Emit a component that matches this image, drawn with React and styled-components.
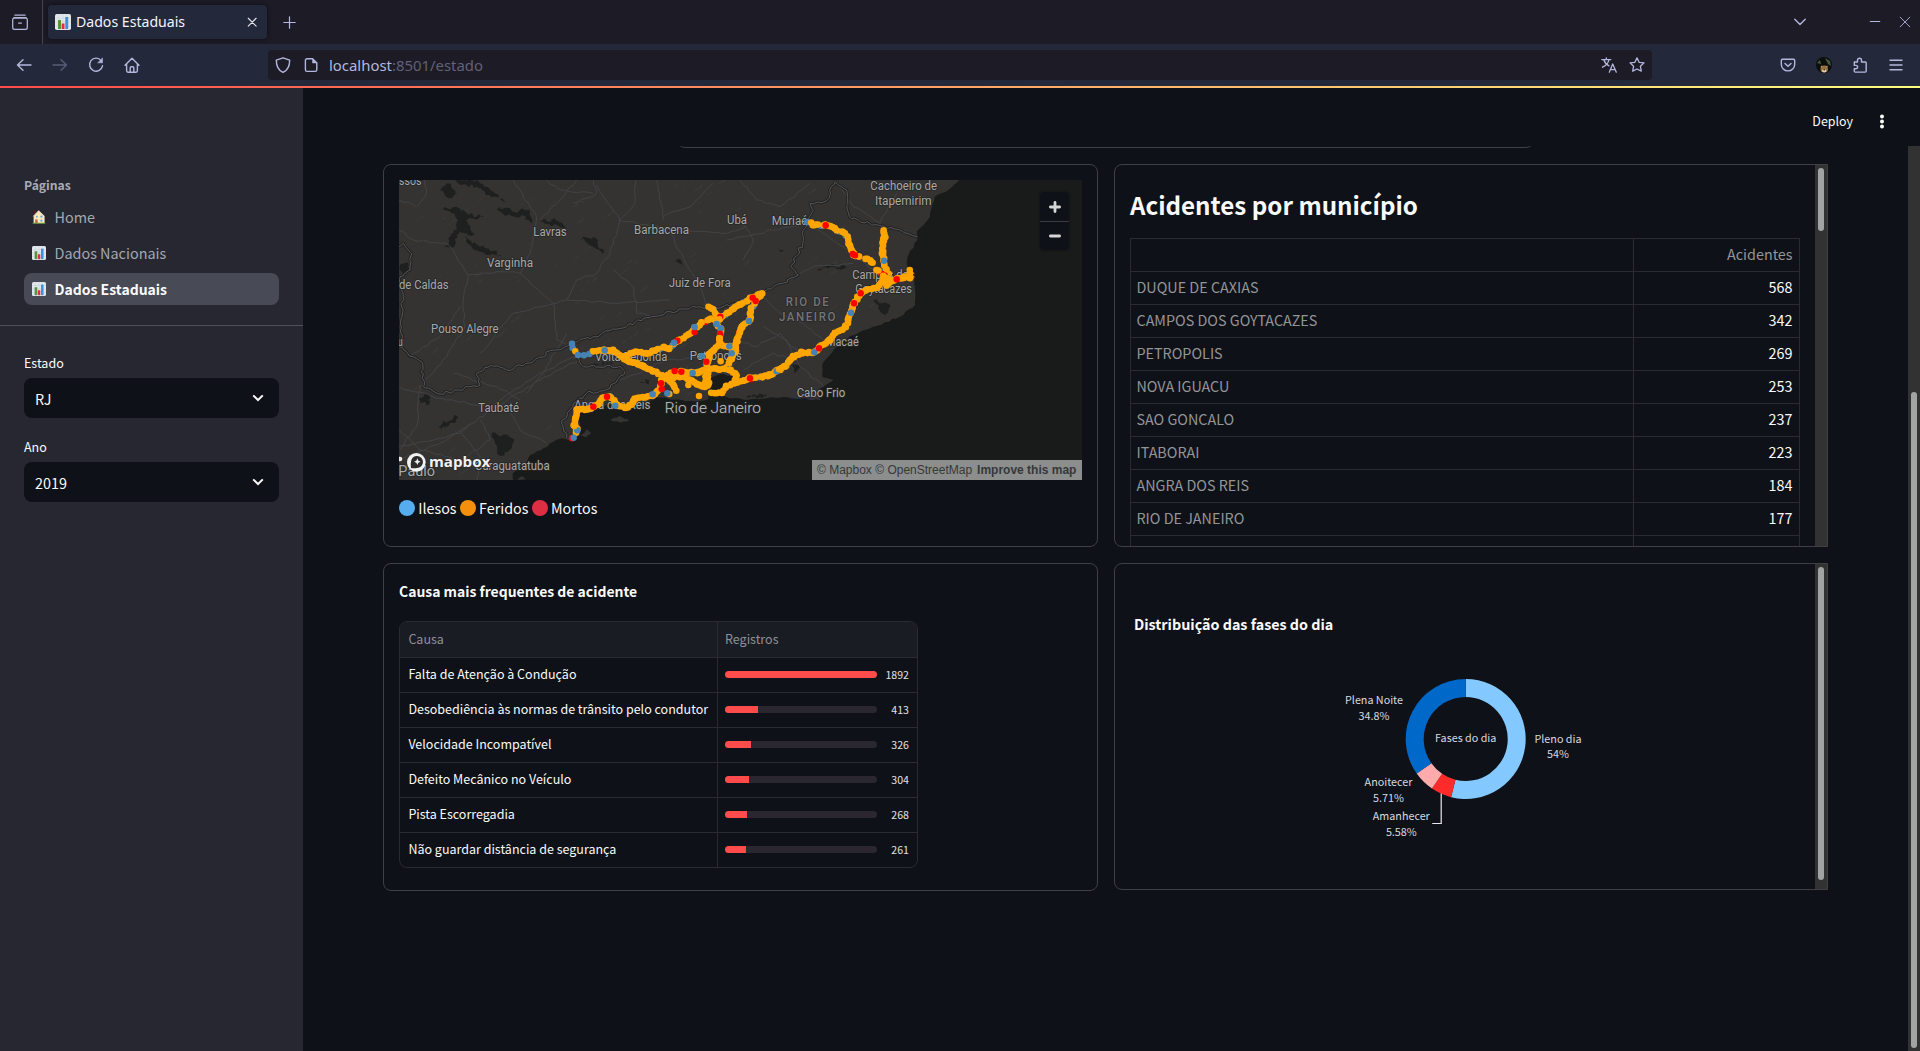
import React from "react";
import styled, { createGlobalStyle } from "styled-components";

const SANS = `"Noto Sans CJK JP", "Source Sans Pro", "Noto Sans", sans-serif`;
const CHROME = `"Noto Sans", "Open Sans", sans-serif`;
const ICON = "#b4b7dd";

const Global = createGlobalStyle`
  *, *::before, *::after { box-sizing: border-box; }
  html, body { margin: 0; padding: 0; background: #0e1117; overflow: hidden; }
  body { font-family: ${SANS}; color: #fafafa; }
  svg { display: block; flex: none; }
`;

/* ---------- browser window ---------- */

const Window = styled.div`
  display: flex;
  flex-direction: column;
  width: 1920px;
  height: 1051px;
  overflow: hidden;
`;

const TabBar = styled.header`
  display: flex;
  align-items: center;
  height: 44px;
  background: #1c1b26;
  flex: none;
`;

const RecentButton = styled.div`
  display: flex;
  align-items: center;
  width: 43px;
  height: 44px;
  padding-left: 12px;
  border-right: 1px solid #44434f;
`;

const Tab = styled.div`
  display: flex;
  align-items: center;
  width: 219px;
  height: 34px;
  margin-left: 5px;
  padding: 0 9px 0 7px;
  border-radius: 4px;
  background: #24283b;
  box-shadow: 0 0 4px rgba(0, 0, 0, 0.5);
`;

const TabTitle = styled.span`
  flex: 1;
  margin-left: 5px;
  font: 400 14.1px/20px ${CHROME};
  color: #f4f4fb;
  white-space: nowrap;
`;

const NewTab = styled.div`
  margin-left: 16px;
`;

const WindowControls = styled.div`
  display: flex;
  align-items: center;
  margin-left: auto;
  padding-right: 8px;
`;

const Spaced = styled.div`
  margin-left: ${(p) => p.$left}px;
`;

const NavBar = styled.nav`
  display: flex;
  align-items: center;
  height: 42px;
  padding-left: 16px;
  background: #24283b;
  flex: none;
`;

const NavButtons = styled.div`
  display: flex;
  gap: 20px;
  width: 252px;
`;

const UrlBar = styled.div`
  display: flex;
  align-items: center;
  width: 1384px;
  height: 30px;
  padding: 0 7px 0 7px;
  border-radius: 4px;
  background: #1c1b26;
`;

const Url = styled.span`
  flex: 1;
  margin-left: 10px;
  font: 400 14.9px/22px ${CHROME};
  color: #626177;
  b {
    font-weight: 400;
    color: #b4b7dd;
  }
`;

const Extensions = styled.div`
  display: flex;
  align-items: center;
  gap: 20px;
  margin-left: 128px;
`;

const Decoration = styled.div`
  height: 2px;
  flex: none;
  background: linear-gradient(90deg, #ff4b4b, #fffd80);
`;

/* ---------- application frame ---------- */

const Frame = styled.div`
  display: flex;
  flex: 1;
  min-height: 0;
`;

const Sidebar = styled.aside`
  width: 303px;
  flex: none;
  background: #262730;
`;

const SideSection = styled.section`
  padding: ${(p) => p.$padding};
`;

const SideTitle = styled.h4`
  margin: 0 0 6px;
  font-size: 12.2px;
  line-height: 20px;
  font-weight: 700;
  color: #a9abb6;
`;

const PageLink = styled.a`
  display: flex;
  align-items: center;
  gap: 8.5px;
  height: 32px;
  margin-bottom: 4px;
  padding-left: 8px;
  border-radius: 8px;
  font-size: ${(p) => (p.$active ? 14 : 14.4)}px;
  line-height: 32px;
  font-weight: ${(p) => (p.$active ? 700 : 400)};
  color: ${(p) => (p.$active ? "#fafafa" : "#a3a8b4")};
  background: ${(p) => (p.$active ? "#484a55" : "transparent")};
`;

const Divider = styled.div`
  height: 1px;
  background: #4d4f59;
`;

const FieldLabel = styled.div`
  font-size: 12.5px;
  line-height: 20px;
  margin: 0 0 5px;
`;

const Select = styled.div`
  display: flex;
  align-items: center;
  justify-content: space-between;
  height: 40px;
  margin-bottom: 19px;
  padding: 0 15px 0 11px;
  border-radius: 8px;
  background: #0e1117;
  font-size: 14.4px;
`;

const Main = styled.main`
  display: flex;
  flex-direction: column;
  flex: 1;
  min-width: 0;
  background: #0e1117;
`;

const Toolbar = styled.div`
  display: flex;
  align-items: center;
  justify-content: flex-end;
  gap: 25px;
  height: 58px;
  padding: 10px 34px 0 0;
  flex: none;
`;

const Deploy = styled.span`
  padding-bottom: 2px;
  font-size: 12.45px;
  line-height: 20px;
`;

const Scroller = styled.div`
  display: flex;
  flex: 1;
  min-height: 0;
`;

const Content = styled.div`
  flex: 1;
  padding-left: 80px;
  overflow: hidden;
`;

const PreviousCard = styled.div`
  width: 857px;
  height: 20px;
  margin: -18px 0 16px 294px;
  border: 1px solid #3e4044;
  border-radius: 8px;
`;

const Grid = styled.div`
  display: grid;
  grid-template-columns: 715px 714px;
  gap: 16px;
  align-items: start;
`;

const Card = styled.section`
  display: flex;
  height: ${(p) => p.$height}px;
  border: 1px solid #3e4044;
  border-radius: ${(p) => (p.$scroll ? "8px 0 0 8px" : "8px")};
  overflow: hidden;
`;

const CardBody = styled.div`
  flex: 1;
  min-width: 0;
  padding: 15px;
`;

const Track = styled.div`
  width: ${(p) => p.$width}px;
  padding: ${(p) => p.$top}px 3px 0;
  background: #323232;
  flex: none;
`;

const Thumb = styled.div`
  height: ${(p) => p.$height}px;
  border-radius: 3px;
  background: #a2a3a3;
`;

/* ---------- map ---------- */

const MapBox = styled.div`
  position: relative;
  width: 683px;
  height: 300px;
  overflow: hidden;
`;

const ZoomButtons = styled.div`
  position: absolute;
  top: 12px;
  right: 13px;
  display: flex;
  flex-direction: column;
  width: 29px;
  border-radius: 4px;
  background: #0e1117;
  box-shadow: 0 0 0 2px rgba(0, 0, 0, 0.1);
`;

const ZoomButton = styled.div`
  display: flex;
  align-items: center;
  justify-content: center;
  height: 29px;
  & + & {
    border-top: 1px solid #3a3c42;
  }
`;

const Attribution = styled.div`
  position: absolute;
  right: 0;
  bottom: 0;
  display: flex;
  gap: 5px;
  width: 270px;
  height: 20px;
  padding: 0 5px;
  background: #8c8d8d;
  font: 12px/20px "Liberation Sans", Arial, sans-serif;
  color: #363838;
  white-space: nowrap;
`;

const MapLabel = styled.text`
  font-family: Roboto, sans-serif;
  font-size: ${(p) => p.$size || 36}px;
  letter-spacing: ${(p) => p.$spacing || 0}px;
  font-weight: ${(p) => p.$weight || 400};
  fill: ${(p) => p.$fill || "#a9a9a9"};
  paint-order: stroke;
  stroke: #262626;
  stroke-width: 5px;
  stroke-linejoin: round;
`;

const Wordmark = styled.text`
  font: 700 43px "Open Sans", sans-serif;
  fill: #f2f2f2;
  paint-order: stroke;
  stroke: #2b2b2b;
  stroke-width: 5px;
`;

const Legend = styled.div`
  display: flex;
  align-items: center;
  gap: 3.3px;
  margin-top: 16px;
  font-size: 14.3px;
  line-height: 24px;
`;

const LegendDot = styled.i`
  width: 16px;
  height: 16px;
  border-radius: 50%;
  background: ${(p) => p.$color};
`;

/* ---------- tables ---------- */

const Heading = styled.h2`
  margin: 0 0 16px;
  padding-top: 8px;
  font-size: 24.15px;
  line-height: 34px;
  font-weight: 700;
`;

const CityTable = styled.div`
  width: 670px;
  border: 1px solid #292b2f;
  border-bottom: 0;
`;

const CityRow = styled.div`
  display: grid;
  grid-template-columns: 502px 1fr;
  height: 33px;
  border-bottom: 1px solid #292b2f;
  font-size: 14.35px;
  line-height: 30px;
`;

const City = styled.div`
  padding-left: 5.5px;
  color: #949597;
`;

const Count = styled.div`
  padding-right: 6.5px;
  border-left: 1px solid #292b2f;
  text-align: right;
  color: ${(p) => (p.$head ? "#949597" : "#fafafa")};
`;

const SmallHeading = styled.h3`
  margin: ${(p) => p.$margin};
  font-size: ${(p) => p.$size}px;
  line-height: 24px;
  font-weight: 700;
`;

const CauseTable = styled.div`
  width: 519px;
  border: 1px solid #292b2f;
  border-radius: 8px;
  overflow: hidden;
`;

const CauseRow = styled.div`
  display: grid;
  grid-template-columns: 318px 1fr;
  height: ${(p) => (p.$head ? 36 : 35)}px;
  background: ${(p) => (p.$head ? "#1a1c24" : "transparent")};
  color: ${(p) => (p.$head ? "#8f9095" : "#fafafa")};
  font-size: 12.5px;
  line-height: ${(p) => (p.$head ? 33 : 32)}px;
  border-bottom: 1px solid #292b2f;
  &:last-child {
    height: 34px;
    border-bottom: 0;
  }
`;

const Cause = styled.div`
  padding-left: 8.4px;
  border-right: 1px solid #292b2f;
  white-space: nowrap;
`;

const Records = styled.div`
  display: flex;
  align-items: ${(p) => (p.$head ? "flex-start" : "center")};
  justify-content: space-between;
  padding: 0 8px 0 7px;
`;

const Bar = styled.div`
  width: 152px;
  height: 7px;
  margin-bottom: 1px;
  border-radius: 4px;
  overflow: hidden;
  background: #2a2730;
`;

const BarFill = styled.div`
  height: 100%;
  background: #ff4b4b;
`;

const RecordCount = styled.span`
  padding-bottom: 1px;
  font-size: 10.6px;
  color: #e2e2e4;
`;

const ChartArea = styled.div`
  svg text {
    font-family: ${SANS};
    font-size: 10.75px;
    fill: #d9dae0;
    text-anchor: middle;
  }
`;

/* ---------- icons ---------- */

const Line = ({ size = 16, color = ICON, width = 1.25, children }) => (
  <svg width={size} height={size} viewBox="0 0 16 16" fill="none" stroke={color} strokeWidth={width} strokeLinecap="round" strokeLinejoin="round">
    {children}
  </svg>
);

const ChartIcon = ({ size = 16 }) => (
  <svg width={size} height={size} viewBox="0 0 16 16">
    <rect width="16" height="16" rx="1.8" fill="#e1e8ed" />
    <path d="M0 4h16M0 8h16M0 12h16M4 0v16M8 0v16M12 0v16" stroke="#c6d3dc" strokeWidth=".6" />
    <rect x="3" y="6" width="3" height="9" fill="#5c913b" />
    <rect x="6.7" y="9.5" width="2.8" height="5.5" fill="#dd2e44" />
    <rect x="10.3" y="3" width="2.9" height="12" fill="#3b94d9" />
  </svg>
);

const HouseIcon = () => (
  <svg width="14" height="14" viewBox="0 0 14 14">
    <rect x="2.7" y="1.3" width="1.6" height="3" fill="#a0041e" />
    <path d="M1.6 6 6.8.6 12.6 6v7.2h-11z" fill="#ffe8b6" />
    <path d="M1 6.3 6.6.7 9 3l2.9 3.2" fill="none" stroke="#d9d6c4" strokeWidth=".7" />
    <rect x="3.2" y="9.4" width="2.4" height="3.6" fill="#c1694f" />
    <rect x="8.4" y="5.6" width="2" height="2" fill="#55acee" />
    <rect x="8.4" y="9.6" width="2" height="2" fill="#55acee" />
    <rect x="4" y="5.8" width="1.6" height="1.6" fill="#55acee" />
    <rect x=".6" y="12.8" width="12.8" height="1" fill="#5c913b" />
  </svg>
);

const Avatar = () => (
  <svg width="16" height="16" viewBox="0 0 16 16">
    <clipPath id="round"><circle cx="8" cy="8" r="8" /></clipPath>
    <g clipPath="url(#round)">
      <rect width="16" height="16" fill="#0b0f0c" />
      <path d="M9 1l5 3 1 5-3-2zM1 6l3-3 1 4z" fill="#455a3c" />
      <ellipse cx="8.2" cy="12" rx="3.8" ry="3.6" fill="#94703f" />
      <path d="M5 9l1.4 1.1M11.500 9l-1.300 1.100" stroke="#b8976b" strokeWidth="1.2" />
      <ellipse cx="8.2" cy="13.8" rx="2.2" ry="1.6" fill="#e2cfb2" />
      <circle cx="8.2" cy="12.8" r=".8" fill="#201a17" />
    </g>
  </svg>
);

const Chevron = () => (
  <svg width="12" height="8" viewBox="0 0 12 8" fill="none" stroke="#fafafa" strokeWidth="2">
    <path d="M1.2 1.4 6 6l4.8-4.6" />
  </svg>
);

/* ---------- map data (units: thirds of a pixel) ---------- */

let seed = 7;
const rnd = () => {
  seed = (seed * 16807) % 2147483647;
  return seed / 2147483647 - 0.5;
};

// Breaks every segment into short jittered steps, like a digitised line.
const rough = (flat, amp = 8, step = 14) => {
  const out = [];
  for (let i = 0; i + 3 < flat.length; i += 2) {
    const [x1, y1, x2, y2] = flat.slice(i, i + 4);
    const n = Math.max(1, Math.round(Math.hypot(x2 - x1, y2 - y1) / step));
    for (let k = 0; k < n; k++) {
      const j = k ? amp : 0;
      out.push([x1 + ((x2 - x1) * k) / n + rnd() * j, y1 + ((y2 - y1) * k) / n + rnd() * j]);
    }
  }
  out.push(flat.slice(-2));
  return out.map((p) => p.map((v) => v.toFixed(1)).join(",")).join(" ");
};

const coast = rough([
  400, 1025, 398, 1000, 440, 965, 450, 945, 490, 925, 520, 905, 545, 895, 575, 900, 600, 885, 600, 850, 590, 815,
  640, 800, 690, 795, 735, 812, 762, 798, 800, 785, 830, 772, 870, 778, 940, 784, 985, 778, 992, 745, 990, 712,
  1030, 702, 1060, 712, 1052, 735, 1030, 742, 1022, 765, 1040, 772, 1100, 780, 1210, 771, 1322, 781, 1310, 755,
  1360, 719, 1328, 712, 1328, 670, 1370, 620, 1410, 588, 1480, 560, 1560, 530, 1605, 495, 1603, 420, 1580, 370,
  1585, 345, 1612, 300, 1610, 275, 1650, 230, 1664, 170, 1705, 150, 1738, 118,
], 5, 12) + " 2110,118 2110,1025";

const islands = [
  [690, 840, 718, 828, 748, 842, 722, 848, 690, 840],
  [602, 888, 620, 868, 634, 880, 615, 892, 602, 888],
  [412, 1020, 425, 1008, 438, 1018],
].map((p) => rough(p, 5, 8));

const darkPatches = [
  [180, 150, 200, 130, 235, 160, 205, 175, 180, 150],
  [225, 120, 290, 120, 345, 160, 380, 190, 330, 165, 290, 140, 240, 135],
  [190, 205, 230, 200, 265, 225, 310, 228, 258, 240, 285, 285, 240, 275, 215, 330, 195, 325, 220, 270, 240, 240, 190, 205],
  [345, 200, 400, 215, 450, 210, 455, 250, 425, 225, 375, 228, 345, 200],
  [480, 245, 525, 235, 560, 265, 510, 255, 480, 245],
  [255, 290, 300, 320, 365, 345, 330, 345, 285, 330, 255, 290],
  [600, 300, 640, 290, 672, 338, 640, 320, 600, 300],
  [880, 365, 900, 358, 910, 378, 880, 365],
  [60, 370, 85, 375, 78, 405, 62, 392, 60, 370],
  [115, 775, 150, 765, 145, 795, 120, 790, 115, 775],
  [175, 860, 225, 825, 235, 835, 195, 865, 175, 860],
  [335, 880, 385, 885, 405, 915, 360, 948, 345, 910, 335, 880],
  [780, 728, 815, 710, 805, 735, 780, 728],
  [1480, 480, 1530, 490, 1515, 525, 1500, 512, 1480, 480],
  [1240, 672, 1262, 678, 1245, 700, 1240, 672],
  [1192, 318, 1216, 330, 1205, 335, 1192, 318],
  [1310, 390, 1360, 374, 1400, 382, 1350, 382, 1310, 390],
  [640, 668, 700, 672, 650, 676, 640, 668],
  [1100, 768, 1160, 765, 1140, 772, 1100, 768],
].map((p) => rough(p, 14, 8));

const borders = [
  [57, 320, 70, 310, 95, 340, 90, 390, 60, 410, 70, 470, 62, 540, 68, 590, 57, 620, 100, 650, 125, 665, 130, 740, 180, 762, 300, 735, 290, 700, 335, 675, 380, 690, 460, 665, 520, 630, 640, 590, 690, 572, 740, 560, 790, 535, 870, 515, 960, 500, 1010, 505, 1110, 478, 1145, 460],
  [590, 650, 610, 680, 720, 678, 735, 695, 690, 745, 620, 760, 580, 790, 545, 850, 560, 895],
  [1145, 460, 1190, 435, 1255, 405, 1232, 380, 1268, 310, 1270, 270, 1300, 210, 1290, 190, 1340, 182, 1365, 125, 1400, 150, 1408, 230, 1480, 255, 1560, 270, 1612, 290],
].map((p) => rough(p, 10, 10));

const roads = [
  [57, 180, 110, 200, 140, 160, 134, 120], [57, 270, 100, 300, 200, 310, 265, 405, 350, 395, 420, 400, 520, 490, 530, 600, 570, 620],
  [265, 405, 250, 480, 255, 560, 200, 650, 120, 740, 110, 860, 60, 930], [480, 240, 540, 180, 590, 120], [400, 120, 470, 230, 450, 340, 420, 400],
  [650, 135, 720, 240, 690, 340, 650, 400, 590, 420, 560, 480, 700, 490, 870, 480], [720, 240, 765, 190, 768, 120],
  [715, 240, 860, 265, 950, 275, 1040, 280, 1100, 260], [870, 280, 905, 340, 960, 440, 985, 500], [830, 120, 850, 240],
  [1040, 300, 1080, 290, 1180, 270, 1275, 250], [1080, 230, 1120, 300, 1090, 360], [300, 640, 400, 520, 560, 480],
  [57, 740, 200, 780, 330, 800, 450, 720, 560, 660, 620, 640], [57, 960, 180, 910, 260, 860, 350, 800, 480, 720, 600, 660],
  [57, 920, 160, 900, 240, 880, 270, 850], [57, 870, 120, 930, 240, 960, 330, 900, 300, 840], [240, 870, 300, 950, 290, 1020],
  [380, 800, 420, 870, 500, 910], [90, 650, 180, 590, 240, 500], [440, 760, 500, 680, 560, 580], [1145, 465, 1200, 520, 1280, 560, 1330, 600],
  [1300, 260, 1420, 340, 1500, 410], [1370, 130, 1420, 200, 1500, 250, 1550, 160], [1230, 420, 1300, 380, 1420, 370],
  [1150, 560, 1220, 600, 1260, 680, 1330, 740], [1060, 600, 1130, 620, 1200, 580, 1260, 640], [1090, 690, 1180, 640, 1240, 660],
  [580, 190, 650, 160, 640, 120], [850, 230, 930, 200, 1000, 130], [500, 120, 540, 150, 640, 160], [1080, 120, 1130, 180, 1200, 200, 1290, 130],
  [220, 700, 350, 740, 420, 780], [700, 390, 760, 440, 770, 520, 840, 530], [720, 720, 780, 700, 860, 660, 960, 650],
].map((p) => rough(p, 7, 16));

// Faint diagonal hill shading over the land.
const hills = Array.from({ length: 190 }, () => {
  const x = 850 + rnd() * 1580;
  const y = 570 + rnd() * 880;
  const len = 14 + (rnd() + 0.5) * 26;
  return rough([x, y, x + len, y - len * 0.75, x + len * 0.75, y - len * 0.35, x, y], 5, 8);
});

const O = "#ffa500";
const B = "#4682b4";
const R = "#ff0000";

const tracks = [
  [640, 632, 674, 631, 700, 632, 725, 650, 750, 664, 790, 678, 820, 692, 850, 708, 880, 712, 915, 712, 950, 732, 975, 740],
  [728, 650, 765, 637, 800, 640, 825, 632, 850, 623, 868, 625, 895, 602, 930, 580, 945, 565, 965, 547, 990, 538, 1018, 538, 1040, 520, 1060, 505, 1080, 493, 1100, 482, 1118, 473, 1146, 460],
  [1146, 460, 1127, 482, 1114, 505, 1110, 540, 1085, 560, 1078, 580, 1070, 605, 1066, 628, 1055, 655, 1042, 680],
  [985, 498, 1000, 510, 1014, 530, 1010, 550, 1022, 565, 1018, 600, 1020, 615, 1048, 619, 1066, 630],
  [1018, 612, 1000, 628, 988, 645, 982, 665, 978, 690, 978, 715, 975, 738],
  [850, 712, 870, 700, 904, 695, 950, 698, 980, 688, 1010, 687, 1050, 690, 1070, 705, 1065, 730, 1040, 738, 1025, 758, 995, 760],
  [1065, 728, 1090, 723, 1110, 715, 1145, 710, 1170, 705, 1192, 692, 1215, 680, 1230, 660, 1240, 650, 1265, 638, 1305, 637, 1320, 622, 1350, 600, 1365, 580, 1395, 562, 1405, 540, 1413, 515, 1422, 490, 1442, 460, 1458, 450, 1492, 442, 1510, 422, 1525, 400],
  [1512, 270, 1514, 290, 1508, 310, 1507, 340, 1512, 362, 1517, 388, 1518, 410, 1520, 435],
  [1283, 245, 1300, 255, 1337, 256, 1365, 265, 1388, 277, 1404, 292, 1408, 310, 1413, 330, 1422, 343, 1440, 352],
  [1456, 356, 1475, 365, 1480, 370], [1490, 388, 1512, 408, 1528, 420], [1520, 435, 1535, 425, 1550, 418, 1572, 412, 1588, 413, 1588, 392],
  [590, 880, 590, 868, 583, 855, 588, 835, 592, 810, 625, 807, 655, 793, 666, 772, 690, 770, 712, 795, 735, 803, 755, 795, 765, 777, 790, 772, 818, 765, 838, 745, 845, 722, 860, 707],
  [865, 715, 880, 735, 890, 750], [735, 660, 768, 668, 790, 680], [960, 738, 985, 735, 985, 700],
];

const beads = tracks.flatMap((flat) => {
  const out = [];
  for (let i = 0; i + 3 < flat.length; i += 2) {
    const [x1, y1, x2, y2] = flat.slice(i, i + 4);
    const n = Math.max(1, Math.round(Math.hypot(x2 - x1, y2 - y1) / 8));
    for (let k = 0; k <= n; k++) {
      const t = rnd();
      out.push([x1 + ((x2 - x1) * k) / n + rnd() * 5, y1 + ((y2 - y1) * k) / n + rnd() * 5, t > 0.455 ? B : t < -0.485 ? R : O]);
    }
  }
  return [...out.filter((d) => d[2] !== O), ...out.filter((d) => d[2] === O)];
});

const marks = [
  [576, 611, B], [578, 624, B], [586, 634, O], [594, 645, B], [612, 646, B], [628, 642, B], [640, 634, O], [674, 631, B], [892, 602, R], [882, 608, B],
  [944, 576, R], [944, 561, B], [1021, 530, R], [1018, 538, O], [1010, 552, B], [1022, 565, B], [1020, 581, R], [1018, 594, O], [1048, 619, B], [1055, 640, B], [965, 648, B],
  [1022, 664, O], [979, 665, R], [884, 693, R], [904, 695, R], [938, 699, B], [925, 735, O], [843, 730, R], [845, 747, R], [868, 762, O], [862, 760, B],
  [818, 763, B], [957, 768, O], [681, 770, R], [640, 800, R], [706, 797, B], [592, 871, B], [576, 895, R], [581, 893, B], [583, 858, O],
  [1110, 715, R], [1107, 543, B], [1118, 473, R], [1127, 483, R], [1190, 694, B], [1197, 688, O], [1303, 637, B], [1317, 625, R],
  [1413, 518, B], [1422, 490, R], [1442, 460, R], [1337, 256, R], [1418, 342, R], [1425, 346, R], [1512, 362, B], [1550, 418, R],
];

const labels = [
  { t: "ssos", x: 57, y: 134, w: 67 }, { t: "Lavras", x: 460, y: 288, w: 100 }, { t: "Varginha", x: 321, y: 380, w: 138 },
  { t: "de Caldas", x: 57, y: 448, w: 149 }, { t: "Pouso Alegre", x: 153, y: 580, w: 203 }, { t: "Taubaté", x: 295, y: 815, w: 122 },
  { t: "u", x: 53, y: 618, w: 15 }, { t: "Barbacena", x: 762, y: 283, w: 165 }, { t: "Ubá", x: 1041, y: 252, w: 60 },
  { t: "Juiz de Fora", x: 866, y: 440, w: 186 }, { t: "Volta Redonda", x: 645, y: 664, w: 217 }, { t: "Petrópolis", x: 929, y: 660, w: 156 },
  { t: "Angra dos Reis", x: 583, y: 808, w: 228 }, { t: "Caraguatatuba", x: 285, y: 991, w: 224 }, { t: "Muriaé", x: 1175, y: 255, w: 107 },
  { t: "Cachoeiro de", x: 1471, y: 151, w: 200 }, { t: "Itapemirim", x: 1485, y: 194, w: 170 }, { t: "Campos dos", x: 1417, y: 417, w: 187 },
  { t: "Goytacazes", x: 1426, y: 460, w: 170 }, { t: "Macaé", x: 1338, y: 619, w: 98 }, { t: "Cabo Frio", x: 1250, y: 771, w: 146 },
  { t: "Paulo", x: 55, y: 1009, w: 110, size: 42 }, { t: "Rio de Janeiro", x: 854, y: 819, w: 289, size: 42, fill: "#c4c4c4", weight: 300 },
  { t: "RIO DE", x: 1217, y: 499, w: 134, fill: "#757575", spacing: 5, weight: 500 }, { t: "JANEIRO", x: 1197, y: 542, w: 174, fill: "#757575", spacing: 5, weight: 500 },
];

const AccidentMap = () => (
  <MapBox>
    <svg width="683" height="300" viewBox="57 120 2049 900">
      <rect x="57" y="120" width="2049" height="900" fill="#343332" />
      <g fill="#393938">{hills.map((p, i) => <polygon key={i} points={p} />)}</g>
      <g fill="#1e1f1f">{darkPatches.map((p, i) => <polygon key={i} points={p} />)}</g>
      <g fill="none" stroke="#424346" strokeWidth="3">{roads.map((p, i) => <polyline key={i} points={p} />)}</g>
      <polygon points={coast} fill="#191a1a" />
      <g fill="#343332">{islands.map((p, i) => <polygon key={i} points={p} />)}</g>
      <g fill="none" stroke="#232323" strokeWidth="9" strokeLinejoin="round">{borders.map((p, i) => <polyline key={i} points={p} />)}</g>
      <g fill="none" stroke="#56575a" strokeWidth="3">{borders.map((p, i) => <polyline key={i} points={p} />)}</g>
      {labels.map((l) => (
        <MapLabel key={l.t} x={l.x} y={l.y} textLength={l.w} lengthAdjust="spacingAndGlyphs" $size={l.size} $fill={l.fill} $spacing={l.spacing} $weight={l.weight}>
          {l.t}
        </MapLabel>
      ))}
      {beads.map(([x, y, c], i) => <circle key={i} cx={x} cy={y} r="9.9" fill={c} />)}
      {marks.map(([x, y, c], i) => <circle key={i} cx={x} cy={y} r="9.7" fill={c} />)}
      <circle cx="60" cy="957" r="7" fill="#eee" />
      <circle cx="109" cy="967" r="28" fill="#f2f2f2" />
      <path d="M93 984c-2-17 0-36 18-36a18 18 0 0 1 0 36c-6 1-12 1-18 0z" fill="#2b2b2b" />
      <path d="M112 955l3 7 7 3-7 3-3 7-3-7-7-3 7-3z" fill="#f2f2f2" />
      <Wordmark x="147" y="982" textLength="184" lengthAdjust="spacingAndGlyphs">mapbox</Wordmark>
    </svg>
    <ZoomButtons>
      <ZoomButton>
        <svg width="12" height="12" viewBox="0 0 12 12" stroke="#d6d6d6" strokeWidth="2.8" strokeLinecap="round"><path d="M6 1.4v9.2M1.4 6h9.2" /></svg>
      </ZoomButton>
      <ZoomButton>
        <svg width="12" height="12" viewBox="0 0 12 12" stroke="#d6d6d6" strokeWidth="2.8" strokeLinecap="round"><path d="M1.4 6h9.2" /></svg>
      </ZoomButton>
    </ZoomButtons>
    <Attribution>
      <span>© Mapbox © OpenStreetMap</span>
      <b>Improve this map</b>
    </Attribution>
  </MapBox>
);

/* ---------- donut ---------- */

const CX = 335.7;
const CY = 160;
const slices = [
  { share: 0.5392, color: "#83c9ff" },
  { share: 0.0558, color: "#ff2b2b" },
  { share: 0.0571, color: "#ffabab" },
  { share: 0.3479, color: "#0068c9" },
];

const at = (f, r) => {
  const a = f * Math.PI * 2;
  return `${(CX + Math.sin(a) * r).toFixed(2)} ${(CY - Math.cos(a) * r).toFixed(2)}`;
};

const Donut = () => {
  let from = 0;
  return (
    <svg width="670" height="270" viewBox="0 0 670 270">
      {slices.map((s) => {
        const to = from + s.share;
        const big = s.share > 0.5 ? 1 : 0;
        const d = `M${at(from, 60)}A60 60 0 ${big} 1 ${at(to, 60)}L${at(to, 42)}A42 42 0 ${big} 0 ${at(from, 42)}Z`;
        from = to;
        return <path key={s.color} d={d} fill={s.color} />;
      })}
      <path d="M311.2 214.5v30h-9" fill="none" stroke="#e8e8ec" strokeWidth="1.2" />
      <text x="335.7" y="162.5">Fases do dia</text>
      <text x="428" y="163.5">Pleno dia</text>
      <text x="428" y="178.5">54%</text>
      <text x="244" y="124.5">Plena Noite</text>
      <text x="244" y="140.5">34.8%</text>
      <text x="258.5" y="206.5">Anoitecer</text>
      <text x="258.5" y="222.5">5.71%</text>
      <text x="271.3" y="240.5">Amanhecer</text>
      <text x="271.3" y="256.5">5.58%</text>
    </svg>
  );
};

/* ---------- content data ---------- */

const cities = [
  ["DUQUE DE CAXIAS", 568],
  ["CAMPOS DOS GOYTACAZES", 342],
  ["PETROPOLIS", 269],
  ["NOVA IGUACU", 253],
  ["SAO GONCALO", 237],
  ["ITABORAI", 223],
  ["ANGRA DOS REIS", 184],
  ["RIO DE JANEIRO", 177],
];

const causes = [
  ["Falta de Atenção à Condução", 1892],
  ["Desobediência às normas de trânsito pelo condutor", 413],
  ["Velocidade Incompatível", 326],
  ["Defeito Mecânico no Veículo", 304],
  ["Pista Escorregadia", 268],
  ["Não guardar distância de segurança", 261],
];

export default function App() {
  return (
    <Window>
      <Global />
      <TabBar>
        <RecentButton>
          <Line><path d="M2.8 1h10.4M1.8 3.6h12.4M2.2 4.2h11.6a1.6 1.6 0 0 1 1.5 1.6v7.6a1.9 1.9 0 0 1-1.9 1.9H2.6A1.9 1.9 0 0 1 .7 13.4V5.8a1.6 1.6 0 0 1 1.5-1.6zM6.6 9h2.8" /></Line>
        </RecentButton>
        <Tab>
          <ChartIcon />
          <TabTitle>Dados Estaduais</TabTitle>
          <Line size={12} color="#e6e6f2" width={1.5}><path d="M3 3l10.5 10.5M13.500 3 3 13.500" /></Line>
        </Tab>
        <NewTab><Line size={13} width={1.5}><path d="M8 1v14M1 8h14" /></Line></NewTab>
        <WindowControls>
          <Line size={14} width={1.6}><path d="M2 4.800l6 6 6-6" /></Line>
          <Spaced $left={61}><Line size={14} width={1.2}><path d="M2.500 7.500h11" /></Line></Spaced>
          <Spaced $left={16}><Line size={14} width={1}><path d="M2.500 2.500l11 11M13.500 2.500l-11 11" /></Line></Spaced>
        </WindowControls>
      </TabBar>
      <NavBar>
        <NavButtons>
          <Line width={1.4}><path d="M15 8H1.500M7 2.700 1.500 8 7 13.300" /></Line>
          <Line width={1.4} color="#575b75"><path d="M1 8h13.500M9 2.700 14.500 8 9 13.300" /></Line>
          <Line width={1.4}><path d="M13.200 3.600A6.500 6.500 0 1 0 14.500 8.800" /><path d="M14.500 1.300v4.500H10z" fill={ICON} strokeWidth=".6" /></Line>
          <Line width={1.4}><path d="M1 8.200 8 1.200l7 7M2.600 7v6.600c0 .9.500 1.600 1.400 1.600h8c.9 0 1.400-.7 1.400-1.600V7M6.200 15v-4.200c0-.6.400-1 1-1h1.600c.6 0 1 .4 1 1V15" /></Line>
        </NavButtons>
        <UrlBar>
          <Line width={1.4}><path d="M8 .8 14.700 3.200c0 6-1.700 9.900-6.700 12.200C3 13.100 1.300 9.200 1.300 3.200z" /></Line>
          <Spaced $left={12}>
            <Line width={1.400}><path d="M4 1.700h5.500l4.300 4.300v6.800a1.600 1.600 0 0 1-1.600 1.600H4a1.600 1.600 0 0 1-1.600-1.600V3.300A1.600 1.600 0 0 1 4 1.700z" /><path d="M9.500 1.700V6h4.300z" fill={ICON} strokeWidth=".5" /></Line>
          </Spaced>
          <Url><b>localhost</b>:8501/estado</Url>
          <Line width={1.3}><path d="M.8 2.600h9M5.300.8v1.800M8 2.600C7.300 6 4.700 8.700 1.500 10.200M2.800 2.800C3.600 5.500 5.500 7.500 8 8.800M8.300 15.200 11.700 7l3.600 8.200M9.500 12.600h4.500" /></Line>
          <Spaced $left={12}>
            <Line width={1.300}><path d="M8 .9l2.100 4.400 4.900.6-3.600 3.400.9 4.900L8 12l-4.300 2.200.9-4.900L1 5.900l4.900-.6z" /></Line>
          </Spaced>
        </UrlBar>
        <Extensions>
          <Line width={1.4}><path d="M2.500 2.200h11c.7 0 1.200.5 1.200 1.200v3.800a6.700 6.700 0 0 1-13.400 0V3.400c0-.7.5-1.200 1.200-1.200zM5 6.400l3 2.800 3-2.800" /></Line>
          <Avatar />
          <Line width={1.400}><path d="M2.300 5h3.200V3.200a2 2 0 0 1 4 0V5h3.800c.5 0 .9.400.9.900v8.200c0 .6-.4 1-1 1H3.200c-.5 0-.9-.4-.9-.9v-2.400H4a1.700 1.700 0 0 0 0-3.400H2.300z" /></Line>
          <Line width={1.4}><path d="M2 3.200h12M2 8h12M2 12.800h12" /></Line>
        </Extensions>
      </NavBar>
      <Decoration />
      <Frame>
        <Sidebar>
          <SideSection $padding="87px 24px 16px">
            <SideTitle>Páginas</SideTitle>
            <PageLink><HouseIcon />Home</PageLink>
            <PageLink><ChartIcon size={14} />Dados Nacionais</PageLink>
            <PageLink $active><ChartIcon size={14} />Dados Estaduais</PageLink>
          </SideSection>
          <Divider />
          <SideSection $padding="27px 24px">
            <FieldLabel>Estado</FieldLabel>
            <Select>RJ<Chevron /></Select>
            <FieldLabel>Ano</FieldLabel>
            <Select>2019<Chevron /></Select>
          </SideSection>
        </Sidebar>
        <Main>
          <Toolbar>
            <Deploy>Deploy</Deploy>
            <svg width="8" height="16" viewBox="0 0 8 16" fill="#fafafa"><circle cx="4" cy="2.500" r="2" /><circle cx="4" cy="7.500" r="2" /><circle cx="4" cy="12.500" r="2" /></svg>
          </Toolbar>
          <Scroller>
            <Content>
              <PreviousCard />
              <Grid>
                <Card $height={383}>
                  <CardBody>
                    <AccidentMap />
                    <Legend>
                      <LegendDot $color="#55acee" />Ilesos
                      <LegendDot $color="#f4900c" />Feridos
                      <LegendDot $color="#dd2e44" />Mortos
                    </Legend>
                  </CardBody>
                </Card>
                <Card $height={383} $scroll>
                  <CardBody>
                    <Heading>Acidentes por município</Heading>
                    <CityTable>
                      <CityRow><City /><Count $head>Acidentes</Count></CityRow>
                      {cities.map(([name, n]) => (
                        <CityRow key={name}><City>{name}</City><Count>{n}</Count></CityRow>
                      ))}
                      <CityRow><City /><Count /></CityRow>
                    </CityTable>
                  </CardBody>
                  <Track $width={12} $top={3}><Thumb $height={63} /></Track>
                </Card>
                <Card $height={328}>
                  <CardBody>
                    <SmallHeading $size={13.95} $margin="0 0 18px">Causa mais frequentes de acidente</SmallHeading>
                    <CauseTable>
                      <CauseRow $head><Cause>Causa</Cause><Records $head>Registros</Records></CauseRow>
                      {causes.map(([name, n]) => (
                        <CauseRow key={name}>
                          <Cause>{name}</Cause>
                          <Records>
                            <Bar><BarFill style={{ width: `${(n / 1892) * 100}%` }} /></Bar>
                            <RecordCount>{n}</RecordCount>
                          </Records>
                        </CauseRow>
                      ))}
                    </CauseTable>
                  </CardBody>
                </Card>
                <Card $height={327} $scroll>
                  <CardBody>
                    <ChartArea>
                      <SmallHeading $size={14.32} $margin="33px 0 -57px 4px">Distribuição das fases do dia</SmallHeading>
                      <Donut />
                    </ChartArea>
                  </CardBody>
                  <Track $width={12} $top={3}><Thumb $height={313} /></Track>
                </Card>
              </Grid>
            </Content>
            <Track $width={12} $top={246}><Thumb $height={656} /></Track>
          </Scroller>
        </Main>
      </Frame>
    </Window>
  );
}
